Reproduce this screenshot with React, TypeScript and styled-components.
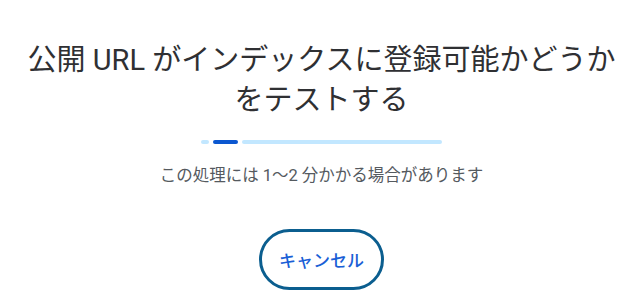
import styled, { createGlobalStyle } from 'styled-components';

const GlobalStyle = createGlobalStyle`
  html, body {
    margin: 0;
    padding: 0;
    background: #ffffff;
  }
  body {
    font-family: Roboto, "Noto Sans CJK JP", sans-serif;
  }
`;

const Page = styled.main`
  width: 643px;
  height: 307px;
  box-sizing: border-box;
  padding-top: 40px;
  display: flex;
  flex-direction: column;
  align-items: center;
  overflow: hidden;
`;

const Title = styled.h1`
  margin: 0;
  width: 600px;
  font-size: 29px;
  line-height: 40px;
  font-weight: 400;
  color: #2f3033;
  text-align: center;
`;

const Progress = styled.div`
  margin-top: 20px;
  display: flex;
  gap: 4px;
  height: 4px;
`;

const Segment = styled.span<{ $w: number; $active?: boolean }>`
  width: ${p => p.$w}px;
  height: 4px;
  border-radius: 2px;
  background: ${p => (p.$active ? '#0b57d0' : '#c2e7ff')};
`;

const Note = styled.p`
  margin: 20px 0 0;
  font-size: 16.5px;
  line-height: 24px;
  color: #555a5f;
  text-align: center;
`;

const CancelButton = styled.button`
  margin-top: 41px;
  width: 125px;
  height: 61px;
  box-sizing: border-box;
  border: 3px solid #0b5e8f;
  border-radius: 31px;
  background: #ffffff;
  color: #1a5fd6;
  font-family: Roboto, "Noto Sans CJK JP", sans-serif;
  font-size: 17px;
  font-weight: 500;
  cursor: pointer;
`;

const App = () => (
  <>
    <GlobalStyle />
    <Page>
      <Title>公開 URL がインデックスに登録可能かどうかをテストする</Title>
      <Progress>
        <Segment $w={8} />
        <Segment $w={25} $active />
        <Segment $w={200} />
      </Progress>
      <Note>この処理には 1〜2 分かかる場合があります</Note>
      <CancelButton>キャンセル</CancelButton>
    </Page>
  </>
);

export default App;
